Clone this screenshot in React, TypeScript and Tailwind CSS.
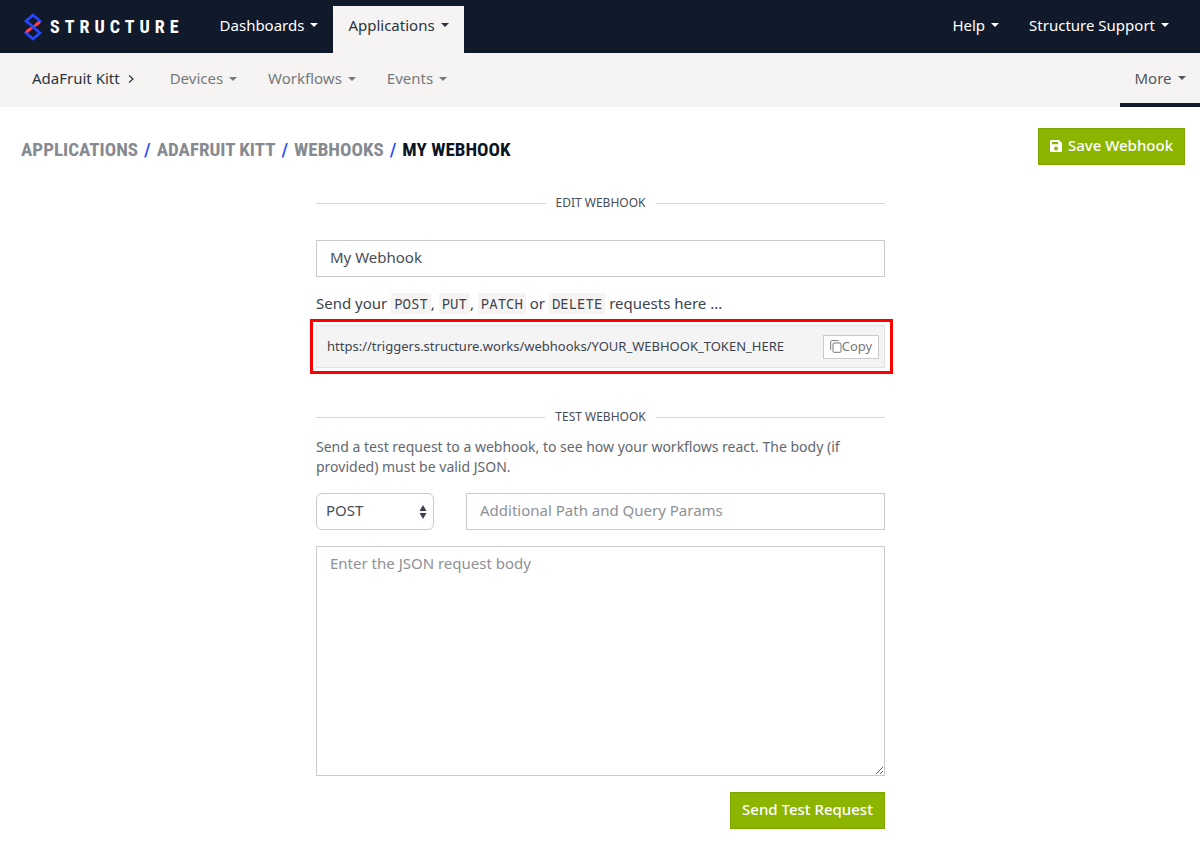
import type { ReactNode } from "react";

function Caret() {
  return (
    <svg viewBox="0 0 8 4" className="h-1 w-2 shrink-0 fill-current" aria-hidden="true">
      <path d="M0 0h8L4 4z" />
    </svg>
  );
}

function LogoMark() {
  return (
    <svg viewBox="0 0 18 28" className="h-7 w-[18px] shrink-0" fill="none" strokeWidth="2.7" aria-hidden="true">
      <path d="M15.600 9.500 2.400 18.600" stroke="#ff4048" />
      <path d="M10.500 14.800 2 8.100 9 2l7 6.100-1.800 1.500" stroke="#2447ff" />
      <path d="m7.500 13 8.500 6.900L9 26l-7-6.100 1.800-1.500" stroke="#2447ff" />
      <path d="m12 11.700 3.800-2.800M6 16.300l-3.800 2.800" stroke="#ff4048" />
    </svg>
  );
}

function SaveIcon() {
  return (
    <svg viewBox="0 0 12 12" className="h-3 w-3 shrink-0" aria-hidden="true">
      <path
        fill="currentColor"
        fillRule="evenodd"
        d="M1.3 0H9l3 3v7.7c0 .7-.6 1.3-1.3 1.3H1.3C.6 12 0 11.400 0 10.700V1.300C0 .6.6 0 1.300 0ZM2 2v2.300h6.200V2H2Zm4 4.600a1.900 1.900 0 1 0 0 3.800 1.900 1.900 0 0 0 0-3.800Z"
      />
    </svg>
  );
}

function CopyIcon() {
  return (
    <svg viewBox="0 0 12 13" className="h-[13px] w-3 shrink-0" fill="none" stroke="currentColor" aria-hidden="true">
      <path d="M.7 10V1.500Q.7.6 1.600.6H8.500" />
      <rect x="3" y="3" width="8" height="9.300" rx="1" />
    </svg>
  );
}

function NavItem({ children, className }: { children: ReactNode; className: string }) {
  return (
    <button type="button" className={`flex items-center gap-1.5 whitespace-nowrap ${className}`}>
      {children}
      <Caret />
    </button>
  );
}

function SectionTitle({ children }: { children: ReactNode }) {
  return (
    <h2 className="flex items-center gap-2.5 text-xs leading-4 text-[#474d58] uppercase before:h-px before:flex-1 before:bg-[#d6d7d9] after:h-px after:flex-1 after:bg-[#d6d7d9]">
      {children}
    </h2>
  );
}

function Code({ children }: { children: ReactNode }) {
  return (
    <code className="bg-[#f5f4f2] px-[3px] py-px font-['Noto_Sans_Mono','DejaVu_Sans_Mono',monospace] text-sm leading-4">
      {children}
    </code>
  );
}

const crumbs = ["Applications", "AdaFruit Kitt", "Webhooks"];
const field = "border border-[#c9cacc] bg-white text-[15px] text-[#474d58] placeholder:text-[#8e9196]";
const primary =
  "flex h-[37px] items-center justify-center gap-1.5 border border-[#7ea600] bg-[#8bb500] pb-0.5 text-[15px] font-medium whitespace-nowrap text-white";

export default function App() {
  return (
    <div className="min-h-screen bg-white pb-8 font-['Noto_Sans',sans-serif] text-[15px] text-[#3d434e]">
      <header className="flex h-[53px] bg-[#111a2b] pr-4 pl-6 text-white">
        <a href="#home" className="flex w-[181px] items-center gap-2">
          <LogoMark />
          <span className="font-['Liberation_Sans_Narrow','Roboto_Condensed','Liberation_Sans',sans-serif] text-lg font-bold tracking-[5px]">
            STRUCTURE
          </span>
        </a>
        <nav className="flex flex-1" aria-label="Main">
          <NavItem className="w-32 justify-center pb-[3px]">Dashboards</NavItem>
          <NavItem className="mt-1.5 w-[131px] justify-center bg-[#f5f4f2] pb-[9px] text-[#2b3340]">Applications</NavItem>
          <div className="ml-auto flex gap-[30px] pr-[15px] pb-[3px]">
            <NavItem className="">Help</NavItem>
            <NavItem className="">Structure Support</NavItem>
          </div>
        </nav>
      </header>

      <nav className="flex h-[54px] bg-[#f5f4f2] pl-8 text-[#75787d]" aria-label="Application">
        <a href="#kitt" className="flex items-center gap-2 pb-[3px] text-[#2b3340]">
          AdaFruit Kitt
          <svg viewBox="0 0 6 8" className="h-2 w-1.5" fill="none" stroke="currentColor" strokeWidth="1.200" aria-hidden="true">
            <path d="m1 .5 4 3.500-4 3.500" />
          </svg>
        </a>
        <div className="flex gap-[31px] pb-[3px] pl-9">
          <NavItem className="">Devices</NavItem>
          <NavItem className="">Workflows</NavItem>
          <NavItem className="">Events</NavItem>
        </div>
        <NavItem className="ml-auto w-20 justify-center border-b-4 border-[#111a2b] text-[#50565f]">More</NavItem>
      </nav>

      <div className="flex items-start justify-between pt-[21px] pr-[15px] pl-[21px]">
        <h1 className="flex gap-1.5 pt-1.5 font-['Liberation_Sans_Narrow','Roboto_Condensed','Liberation_Sans',sans-serif] text-[19px] leading-8 font-bold text-[#0b1526] uppercase">
          {crumbs.map((c) => (
            <span key={c} className="flex gap-1.5">
              <a href="#crumb" className="text-[#868a91]">
                {c}
              </a>
              <span className="font-medium text-[#2447ff]">/</span>
            </span>
          ))}
          <span>My Webhook</span>
        </h1>
        <button type="button" className={`${primary} w-[147px]`}>
          <SaveIcon />
          Save Webhook
        </button>
      </div>

      <main className="mx-auto w-1/2 pt-[29px] pr-[15px] pl-4">
        <SectionTitle>Edit webhook</SectionTitle>
        <input aria-label="Webhook name" defaultValue="My Webhook" className={`${field} mt-[29px] block h-[37px] w-full px-[13px] pb-1`} />
        <p className="mt-4 leading-5">
          Send your <Code>POST</Code>, <Code>PUT</Code>, <Code>PATCH</Code> or <Code>DELETE</Code> requests here ...
        </p>
        <div className="relative mt-3 flex h-[43px] items-center justify-between border border-[#e3e3e4] bg-[#f4f4f4] pr-[5px] pl-2.5">
          <span className="text-[13px]">https://triggers.structure.works/webhooks/YOUR_WEBHOOK_TOKEN_HERE</span>
          <button
            type="button"
            className="flex h-6 w-14 items-center justify-center border border-[#c9cacc] bg-white text-[13px] text-[#75787d]"
          >
            <CopyIcon />
            Copy
          </button>
          <div className="pointer-events-none absolute -inset-y-[7px] -right-[9px] -left-[7px] border-3 border-[#fa0000]" />
        </div>

        <div className="mt-[41px]">
          <SectionTitle>Test webhook</SectionTitle>
        </div>
        <p className="mt-3 text-sm leading-5 text-[#63676e]">
          Send a test request to a webhook, to see how your workflows react. The body (if provided) must be valid JSON.
        </p>
        <div className="mt-4 flex gap-8">
          <div className="relative w-[118px]">
            <select aria-label="Method" className={`${field} h-[37px] w-full appearance-none rounded-md px-[9px] pb-0.5`}>
              <option>POST</option>
              <option>PUT</option>
              <option>PATCH</option>
              <option>DELETE</option>
            </select>
            <svg
              viewBox="0 0 8 14"
              className="pointer-events-none absolute top-3 right-[7px] h-3.5 w-2 fill-[#3d434e]"
              aria-hidden="true"
            >
              <path d="M4 0l3.500 6h-7zM4 14 .5 8h7z" />
            </svg>
          </div>
          <input
            aria-label="Additional path and query params"
            placeholder="Additional Path and Query Params"
            className={`${field} h-[37px] min-w-0 flex-1 px-[13px] pb-1`}
          />
        </div>
        <textarea
          aria-label="Request body"
          placeholder="Enter the JSON request body"
          className={`${field} mt-4 block h-[230px] w-full px-[13px] py-1.5 leading-5`}
        />
        <button type="button" className={`${primary} mt-4 ml-auto w-[155px]`}>
          Send Test Request
        </button>
      </main>
    </div>
  );
}
